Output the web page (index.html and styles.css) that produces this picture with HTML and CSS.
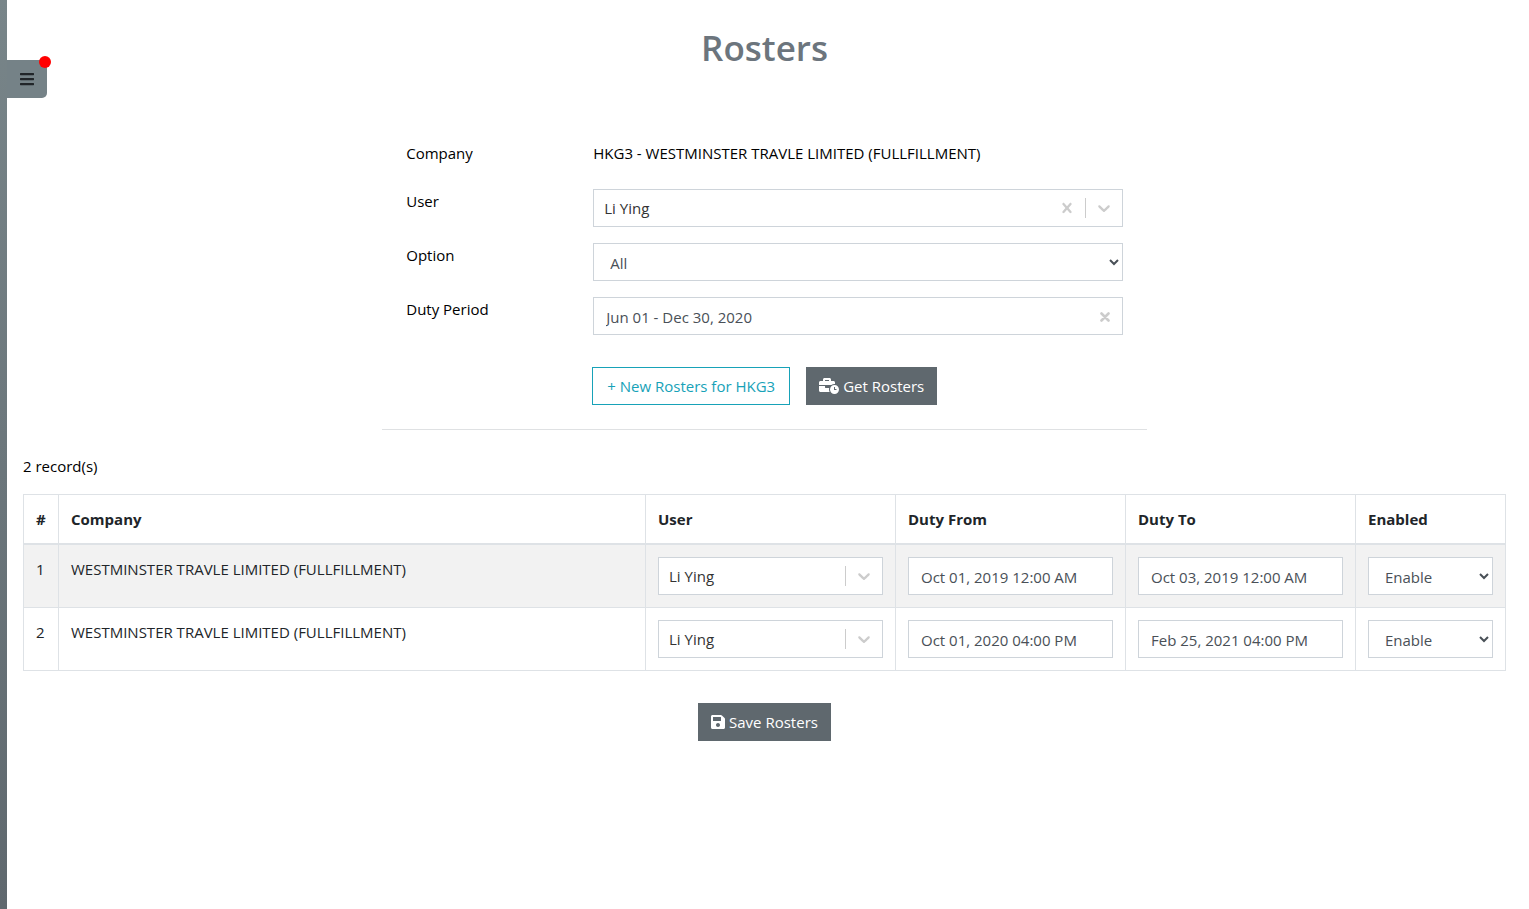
FILE: index.html
```html
<!DOCTYPE html>
<html lang="en">
<head>
<meta charset="utf-8">
<title>Rosters</title>
<link rel="stylesheet" href="styles.css">
</head>
<body>
<svg class="sprite" aria-hidden="true">
  <symbol id="bars" viewBox="0 0 448 512"><path d="M16 132h416c8.837 0 16-7.163 16-16V76c0-8.837-7.163-16-16-16H16C7.163 60 0 67.163 0 76v40c0 8.837 7.163 16 16 16zm0 160h416c8.837 0 16-7.163 16-16v-40c0-8.837-7.163-16-16-16H16c-8.837 0-16 7.163-16 16v40c0 8.837 7.163 16 16 16zm0 160h416c8.837 0 16-7.163 16-16v-40c0-8.837-7.163-16-16-16H16c-8.837 0-16 7.163-16 16v40c0 8.837 7.163 16 16 16z"/></symbol>
  <symbol id="business-time" viewBox="0 0 640 512"><path d="M496 224c-79.59 0-144 64.41-144 144s64.41 144 144 144 144-64.41 144-144-64.41-144-144-144zm64 150.29c0 5.34-4.37 9.71-9.71 9.71h-60.57c-5.34 0-9.71-4.37-9.71-9.71v-76.57c0-5.34 4.37-9.71 9.71-9.71h12.57c5.34 0 9.71 4.37 9.71 9.71V352h38.29c5.34 0 9.71 4.37 9.71 9.71v12.58zM496 192c5.4 0 10.72.33 16 .81V144c0-25.6-22.4-48-48-48h-80V48c0-25.6-22.4-48-48-48H176c-25.6 0-48 22.4-48 48v48H48c-25.6 0-48 22.4-48 48v80h395.12c28.6-20.09 63.35-32 100.88-32zM320 96H192V64h128v32zm6.82 224H208c-8.84 0-16-7.16-16-16v-48H0v144c0 25.6 22.4 48 48 48h291.43C327.1 423.96 320 396.82 320 368c0-16.66 2.48-32.72 6.82-48z"/></symbol>
  <symbol id="save" viewBox="0 0 448 512"><path d="M433.941 129.941l-83.882-83.882A48 48 0 0 0 316.118 32H48C21.49 32 0 53.49 0 80v352c0 26.51 21.49 48 48 48h352c26.51 0 48-21.49 48-48V163.882a48 48 0 0 0-14.059-33.941zM224 416c-35.346 0-64-28.654-64-64 0-35.346 28.654-64 64-64s64 28.654 64 64c0 35.346-28.654 64-64 64zm96-304.52V212c0 6.627-5.373 12-12 12H76c-6.627 0-12-5.373-12-12V108c0-6.627 5.373-12 12-12h228.52c3.183 0 6.235 1.264 8.485 3.515l3.48 3.48A11.996 11.996 0 0 1 320 111.48z"/></symbol>
  <symbol id="cross" viewBox="0 0 20 20"><path d="M14.348 14.849c-0.469 0.469-1.229 0.469-1.697 0l-2.651-3.030-2.651 3.029c-0.469 0.469-1.229 0.469-1.697 0-0.469-0.469-0.469-1.229 0-1.697l2.758-3.15-2.759-3.152c-0.469-0.469-0.469-1.228 0-1.697s1.228-0.469 1.697 0l2.652 3.031 2.651-3.031c0.469-0.469 1.228-0.469 1.697 0s0.469 1.229 0 1.697l-2.758 3.152 2.758 3.15c0.469 0.469 0.469 1.229 0 1.698z"/></symbol>
  <symbol id="times" viewBox="0 0 10 10"><path d="M1.5 1.5l7 7M8.500 1.5l-7 7" fill="none" stroke="currentColor" stroke-width="2.600" stroke-linecap="round"/></symbol>
  <symbol id="chevron" viewBox="0 0 20 20"><path d="M4.516 7.548c0.436-0.446 1.043-0.481 1.576 0l3.908 3.747 3.908-3.747c0.533-0.481 1.141-0.446 1.574 0 0.436 0.445 0.408 1.197 0 1.615-0.406 0.418-4.695 4.502-4.695 4.502-0.217 0.223-0.502 0.335-0.787 0.335s-0.57-0.112-0.789-0.335c0 0-4.287-4.084-4.695-4.502s-0.436-1.17 0-1.615z"/></symbol>
</svg>

<aside class="rail">
  <button class="menu-tab" type="button" aria-label="Menu">
    <svg class="icon-bars"><use href="#bars"/></svg>
    <span class="dot"></span>
  </button>
</aside>

<main class="page">
  <h1 class="title">Rosters</h1>

  <form class="filters">
    <div class="row row-static">
      <span>Company</span>
      <span>HKG3 - WESTMINSTER TRAVLE LIMITED (FULLFILLMENT)</span>
    </div>
    <div class="row">
      <label for="user">User</label>
      <div class="control">
        <input class="control-input" id="user" type="text" value="Li Ying">
        <button class="control-btn" type="button" aria-label="Clear user"><svg class="icon-20"><use href="#cross"/></svg></button>
        <span class="control-sep"></span>
        <button class="control-btn" type="button" aria-label="Show users"><svg class="icon-20"><use href="#chevron"/></svg></button>
      </div>
    </div>
    <div class="row">
      <label for="option">Option</label>
      <select class="field" id="option"><option>All</option></select>
    </div>
    <div class="row">
      <label for="period">Duty Period</label>
      <div class="control control-date">
        <input class="control-input" id="period" type="text" value="Jun 01 - Dec 30, 2020">
        <button class="control-btn" type="button" aria-label="Clear period"><svg class="icon-10"><use href="#times"/></svg></button>
      </div>
    </div>
    <div class="actions">
      <button class="btn btn-outline" type="button">+ New Rosters for HKG3</button>
      <button class="btn btn-solid" type="button"><svg class="icon-time"><use href="#business-time"/></svg>Get Rosters</button>
    </div>
  </form>

  <p class="count">2 record(s)</p>

  <table class="rosters">
    <colgroup>
      <col class="col-num"><col><col class="col-user"><col class="col-date"><col class="col-date"><col class="col-enabled">
    </colgroup>
    <thead>
      <tr><th>#</th><th>Company</th><th>User</th><th>Duty From</th><th>Duty To</th><th>Enabled</th></tr>
    </thead>
    <tbody>
      <tr>
        <td>1</td>
        <td>WESTMINSTER TRAVLE LIMITED (FULLFILLMENT)</td>
        <td>
          <div class="control">
            <input class="control-input" type="text" value="Li Ying" aria-label="User, row 1">
            <span class="control-sep"></span>
            <button class="control-btn" type="button" aria-label="Show users"><svg class="icon-20"><use href="#chevron"/></svg></button>
          </div>
        </td>
        <td><input class="field" type="text" value="Oct 01, 2019 12:00 AM" aria-label="Duty from, row 1"></td>
        <td><input class="field" type="text" value="Oct 03, 2019 12:00 AM" aria-label="Duty to, row 1"></td>
        <td><select class="field" aria-label="Enabled, row 1"><option>Enable</option></select></td>
      </tr>
      <tr>
        <td>2</td>
        <td>WESTMINSTER TRAVLE LIMITED (FULLFILLMENT)</td>
        <td>
          <div class="control">
            <input class="control-input" type="text" value="Li Ying" aria-label="User, row 2">
            <span class="control-sep"></span>
            <button class="control-btn" type="button" aria-label="Show users"><svg class="icon-20"><use href="#chevron"/></svg></button>
          </div>
        </td>
        <td><input class="field" type="text" value="Oct 01, 2020 04:00 PM" aria-label="Duty from, row 2"></td>
        <td><input class="field" type="text" value="Feb 25, 2021 04:00 PM" aria-label="Duty to, row 2"></td>
        <td><select class="field" aria-label="Enabled, row 2"><option>Enable</option></select></td>
      </tr>
    </tbody>
  </table>

  <div class="save-bar">
    <button class="btn btn-solid" type="button"><svg class="icon-save"><use href="#save"/></svg>Save Rosters</button>
  </div>
</main>
</body>
</html>
```
FILE: styles.css
```css
* {
  box-sizing: border-box;
}

body {
  margin: 0;
  background: #fff;
  color: #000;
  font: 15px/24px "Open Sans", "Noto Sans", sans-serif;
}

input,
select,
button {
  margin: 0;
  border-radius: 0;
  font: inherit;
}

svg {
  display: block;
  flex: none;
  fill: currentColor;
}

.sprite {
  display: none;
}

/* Collapsed side menu */
.rail {
  position: fixed;
  top: 0;
  bottom: 0;
  left: 0;
  width: 7px;
  background: linear-gradient(#788589, #5f686e);
}

.menu-tab {
  position: absolute;
  top: 60px;
  left: 7px;
  display: flex;
  align-items: center;
  width: 40px;
  height: 38px;
  padding: 0 13px;
  border: 0;
  border-radius: 0 0 5px 0;
  background: #758287;
  color: #212529;
}

.icon-bars {
  width: 14px;
  height: 16px;
}

.dot {
  position: absolute;
  top: -4px;
  right: -4px;
  width: 12px;
  height: 12px;
  border-radius: 50%;
  background: #f00;
}

.page {
  padding: 24px 23px;
}

.title {
  margin: 0 0 69px;
  color: #6c757d;
  font-size: 35px;
  font-weight: 600;
  line-height: 48px;
  text-align: center;
}

/* Search form */
.filters {
  width: 50vw;
  min-width: 560px;
  margin: 0 auto 24px;
  padding: 0 24px 24px;
  border-bottom: 1px solid #dfe1e3;
}

.row {
  display: grid;
  grid-template-columns: 187px 1fr;
  align-items: start;
  margin-bottom: 16px;
}

.row-static {
  margin-bottom: 24px;
}

.field,
.control {
  width: 100%;
  height: 38px;
  border: 1px solid #ced4da;
  background: #fff;
}

.field {
  display: block;
  padding: 7px 12px 5px;
  color: #495057;
}

.control {
  display: flex;
  align-items: center;
}

.control-input {
  flex: 1;
  min-width: 0;
  padding: 0 10px;
  border: 0;
  background: none;
  color: #333;
}

.control-btn {
  padding: 8px;
  border: 0;
  background: none;
  color: #ccc;
}

.control-date {
  padding: 2px 4px 0 2px;
}

.control-date .control-input {
  color: #495057;
}

.control-sep {
  width: 1px;
  height: 20px;
  background: #ccc;
}

.icon-20 {
  width: 20px;
  height: 20px;
}

.icon-10 {
  width: 10px;
  height: 10px;
}

.actions {
  display: flex;
  gap: 16px;
  margin-top: 32px;
  padding-left: 186px;
}

.btn {
  display: flex;
  align-items: center;
  gap: 4px;
  height: 38px;
  padding: 0 12px;
  border: 1px solid #5f686e;
  white-space: nowrap;
}

.btn-solid {
  background: #5f686e;
  color: #fff;
}

.btn-outline {
  padding: 0 14px;
  border-color: #17a2b8;
  background: none;
  color: #17a2b8;
}

.icon-time {
  width: 20px;
  height: 16px;
}

.icon-save {
  width: 14px;
  height: 16px;
}

/* Results */
.count {
  margin: 0 0 16px;
}

.rosters {
  width: 100%;
  table-layout: fixed;
  border-collapse: collapse;
  color: #212529;
}

.col-num {
  width: 35px;
}

.col-user {
  width: 250px;
}

.col-date {
  width: 230px;
}

.col-enabled {
  width: 150px;
}

.rosters th,
.rosters td {
  padding: 12px;
  border: 1px solid #dee2e6;
  text-align: left;
  vertical-align: top;
}

.rosters th {
  border-bottom-width: 2px;
  font-weight: 700;
}

.rosters tbody tr:nth-child(odd) {
  background: #f2f2f2;
}

.save-bar {
  display: flex;
  justify-content: center;
  margin-top: 32px;
}
```
